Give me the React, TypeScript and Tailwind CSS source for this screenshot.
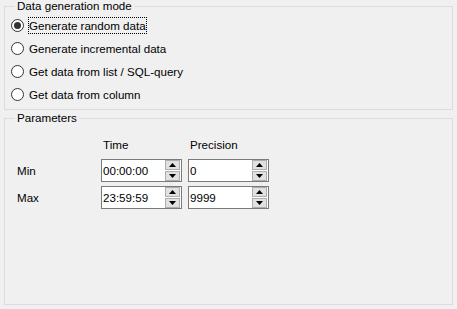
import React from "react";

function Radio({ label, checked, focused }: { label: string; checked?: boolean; focused?: boolean }) {
  return (
    <div className="flex h-[23px] items-center">
      <div className="ml-[6px] flex h-[13px] w-[13px] items-center justify-center rounded-full border border-[#333333] bg-white">
        {checked && <div className="h-[7px] w-[7px] rounded-full bg-[#333333]" />}
      </div>
      <div
        className={
          "ml-[4px] flex h-[17px] items-center px-[1px] " +
          (focused ? "outline outline-1 outline-dotted outline-black -outline-offset-1" : "")
        }
      >
        {label}
      </div>
    </div>
  );
}

function Arrow({ up }: { up?: boolean }) {
  return (
    <svg width="7" height="4" viewBox="0 0 7 4">
      {up ? <polygon points="0,4 7,4 3.5,0" fill="#000" /> : <polygon points="0,0 7,0 3.5,4" fill="#000" />}
    </svg>
  );
}

function Spinner({ value }: { value: string }) {
  return (
    <div className="flex h-[23px] w-[81px] items-stretch border border-[#7a7a7a] bg-white">
      <div className="flex flex-1 items-center pl-[1px] leading-none">{value}</div>
      <div className="mr-[1px] flex w-[15px] flex-col gap-[1px]">
        <div className="flex h-[10px] items-center justify-center border border-[#adadad] bg-[#e1e1e1]">
          <Arrow up />
        </div>
        <div className="flex h-[10px] items-center justify-center border border-[#adadad] bg-[#e1e1e1]">
          <Arrow />
        </div>
      </div>
    </div>
  );
}

export default function App() {
  return (
    <div
      className="h-[309px] w-[457px] overflow-hidden bg-[#f0f0f0] pl-[4px] pt-[6px] text-[11.6px] text-black"
      style={{ fontFamily: '"Liberation Sans", Arial, sans-serif' }}
    >
      <div className="relative h-[104px] w-[449px] border border-[#dcdcdc] pt-[7px]">
        <span className="absolute -top-[9px] left-[10px] bg-[#f0f0f0] px-[2px] leading-[16px]">Data generation mode</span>
        <Radio label="Generate random data" checked focused />
        <Radio label="Generate incremental data" />
        <Radio label="Get data from list / SQL-query" />
        <Radio label="Get data from column" />
      </div>
      <div className="relative mt-[8px] h-[187px] w-[449px] border border-[#dcdcdc] pl-[12px] pt-[18px]">
        <span className="absolute -top-[9px] left-[10px] bg-[#f0f0f0] px-[2px] leading-[16px]">Parameters</span>
        <div className="grid grid-cols-[78px_81px_81px] gap-x-[6px] gap-y-[4px]">
          <div />
          <div className="h-[18px] pl-[2px] leading-[16px]">Time</div>
          <div className="h-[18px] pl-[2px] leading-[16px]">Precision</div>
          <div className="flex items-center">Min</div>
          <Spinner value="00:00:00" />
          <Spinner value="0" />
          <div className="flex items-center">Max</div>
          <Spinner value="23:59:59" />
          <Spinner value="9999" />
        </div>
      </div>
    </div>
  );
}
